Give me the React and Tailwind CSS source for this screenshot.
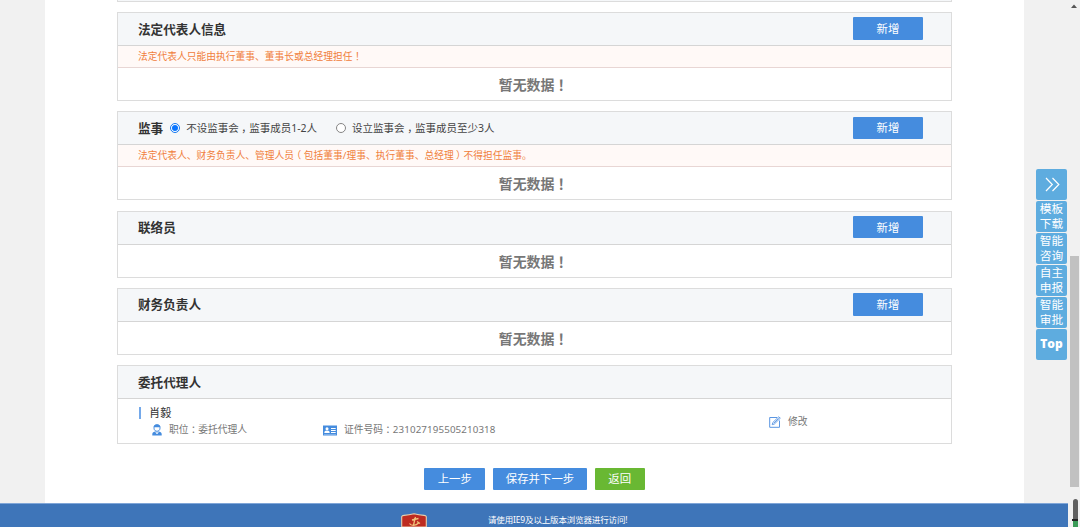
import clsx from 'clsx';

const sections = [
  { title: '法定代表人信息', notice: '法定代表人只能由执行董事、董事长或总经理担任！' },
  {
    title: '监事',
    options: ['不设监事会，监事成员1-2人', '设立监事会，监事成员至少3人'],
    notice: '法定代表人、财务负责人、管理人员（包括董事/理事、执行董事、总经理）不得担任监事。',
  },
  { title: '联络员' },
  { title: '财务负责人' },
];

const sideLinks = [
  ['模板', '下载'],
  ['智能', '咨询'],
  ['自主', '申报'],
  ['智能', '审批'],
];

/* Full-width marks sit in the middle of their cell */
const Text = ({ children }) =>
  children.split(/([，：！（）])/).map((part, i) =>
    /[，：！（）]/.test(part) ? (
      <span key={i} className="inline-block px-[0.25em] [font-feature-settings:'halt']">{part}</span>
    ) : (
      part
    )
  );

const Radio = ({ label, checked }) => (
  <label className="flex items-center text-[10.5px] text-[#444]">
    <span
      className={clsx(
        'mr-[6px] flex size-[10px] items-center justify-center rounded-full border bg-white',
        checked ? 'border-[#1478f0]' : 'border-[#858585]'
      )}
    >
      {checked && <span className="size-[6px] rounded-full bg-[#0875ff]" />}
    </span>
    <span className="pt-[2px]"><Text>{label}</Text></span>
  </label>
);

const Header = ({ title, options, action }) => (
  <div className="flex h-[33px] items-center border-b border-[#d5d5d5] bg-[#f5f7f9] pr-[28px] pl-[20px]">
    <h2 className="pt-[2px] text-[12.6px] font-bold text-[#333]">{title}</h2>
    {options && (
      <div className="ml-[7px] flex gap-[19px]">
        {options.map((label, i) => (
          <Radio key={label} label={label} checked={i === 0} />
        ))}
      </div>
    )}
    {action && (
      <button className="mb-px ml-auto h-[22.5px] w-[70px] rounded-[1px] bg-[#458cde] text-[11.4px] text-white">新增</button>
    )}
  </div>
);

const EmptySection = ({ title, options, notice }) => (
  <section className="border border-[#dcdcdc]">
    <Header title={title} options={options} action />
    {notice && (
      <p className="h-[22px] border-b border-[#e8d6d4] bg-[#fff9f7] pl-[20px] text-[9.75px] leading-[21.5px] text-[#f0803c]">
        <Text>{notice}</Text>
      </p>
    )}
    <p className="h-[32px] pr-[2px] text-center text-[13.9px] leading-[33.5px] font-bold text-[#777]">
      <Text>暂无数据！</Text>
    </p>
  </section>
);

const PersonIcon = () => (
  <svg className="h-[12px] w-[10px]" viewBox="0 0 10 12" fill="none" stroke="#458cde">
    <path d="M2 3.2C2 1.4 3.2.7 5 .7s3 .7 3 2.5v1C8 6 6.6 7.3 5 7.3S2 6 2 4.2z" />
    <path d="M2 3.3h6V2C7 .4 3 .4 2 2zM.3 11.5V10c0-1.5 1.5-2.2 3.2-2.4L5 9.3l1.5-1.7c1.7.2 3.2.9 3.2 2.4v1.5z" fill="#458cde" stroke="none" />
    <path d="M3.5 8.5L5 10l1.5-1.5" stroke="#fff" strokeWidth=".7" />
  </svg>
);

const IdCardIcon = () => (
  <svg className="h-[11px] w-[14px]" viewBox="0 0 14 11">
    <path d="M0 .5h14v10H0z" fill="#458cde" />
    <circle cx="4" cy="3.8" r="1.5" fill="#fff" />
    <path d="M1.3 8.1c0-1.7.8-2.5 2.7-2.5s2.7.8 2.7 2.5zM8 3h4.7v1H8zM8 5h4.7v1H8zM8 7h4.7v1H8z" fill="#fff" />
    <path d="M1 9.2h12v.5H1z" fill="#b5d1f3" />
  </svg>
);

const EditIcon = () => (
  <svg className="h-[12px] w-[12px]" viewBox="0 0 12 12" fill="none" stroke="#5b96e2">
    <path d="M8 1.5H.7v9.8h9.8V4.5" />
    <path d="M3.2 8.7l.6-2.2L9.7.8l1.6 1.4-6 5.9zM4.7 7.3l5-5" strokeWidth=".9" />
  </svg>
);

const AgentSection = () => (
  <section className="border border-[#dcdcdc]">
    <Header title="委托代理人" />
    <div className="flex h-[44px] text-[9.78px] text-[#777]">
      <div className="w-[651px] pt-[6px] pl-[21px]">
        <div className="flex h-[15px] items-center text-[11.2px] text-[#333]">
          <span className="mr-[8px] h-[12px] w-[2px] bg-[#74a9ea]" />
          <span className="pt-px">肖毅</span>
        </div>
        <div className="flex h-[20px] items-center pl-[13px]">
          <div className="flex w-[171px] items-center gap-[7px]">
            <PersonIcon />
            <span><Text>职位：委托代理人</Text></span>
          </div>
          <div className="flex items-center gap-[7px]">
            <IdCardIcon />
            <span><Text>证件号码：</Text><span className="tracking-[0.12px]">231027195505210318</span></span>
          </div>
        </div>
      </div>
      <div className="flex h-[45px] items-center gap-[7px]">
        <EditIcon />
        <span className="pt-[2px]">修改</span>
      </div>
    </div>
  </section>
);

const SideMenu = () => (
  <nav className="flex w-[31px] flex-col gap-px text-[11.7px] text-white">
    <div className="flex h-[31px] items-center justify-center rounded-[2px] bg-[#5eacdf] pl-px">
      <svg className="h-[15px] w-[15px]" viewBox="0 0 15 15" fill="none" stroke="currentColor" strokeWidth="1.2">
        <path d="M1 1l6.3 6.5L1 14M7.5 1l6.3 6.5-6.3 6.5" />
      </svg>
    </div>
    {sideLinks.map(([top, bottom], i) => (
      <div key={i} className="h-[31px] rounded-[2px] bg-[#5eacdf] text-center leading-[14.5px]">
        <div>{top}</div>
        <div>{bottom}</div>
      </div>
    ))}
    <div className="flex h-[31px] items-center justify-center rounded-[2px] bg-[#5eacdf] pb-[2px] font-['Open_Sans',sans-serif] text-[12px] font-extrabold">
      Top
    </div>
  </nav>
);

const Emblem = () => (
  <svg className="h-[14px] w-[26px]" viewBox="0 0 26 14">
    <path d="M.7 14V3.6Q1 2.6 3 2.4Q8 2.2 13 .8q5 1.4 10 1.6 2 .2 2.3 1.2V14z" fill="#bd2b20" stroke="#e7d0ad" strokeWidth="1.1" />
    <path d="M14.5 4l-2 8M11 7l6.5-1.5M8.5 10.5c1.5 2.5 6.5 2.5 9-.5M16 8.5l3 2" fill="none" stroke="#efc079" strokeWidth="1.3" />
  </svg>
);

const Scrollbar = () => (
  <div className="flex h-[527px] w-[12px] flex-col items-center bg-[#f1f1f1]">
    <svg className="mt-[4px] h-[4px] w-[6px] shrink-0" viewBox="0 0 6 4"><path d="M3 .5L6 4H0z" fill="#555" /></svg>
    <div className="mt-[248px] h-[231px] w-[9px] shrink-0 bg-[#c1c1c1]" />
    <div className="mt-[12px] ml-[3px] h-[20px] w-[5px] shrink-0 rounded-t-[3px] bg-[#606060]" />
    <div className="ml-[2px] h-[2px] w-[6px] shrink-0 bg-[#222]" />
    <div className="ml-[3px] h-[6px] w-[5px] shrink-0 bg-[#3a9b57]" />
  </div>
);

const App = () => (
  <div className="flex h-[527px] w-[1080px] overflow-hidden bg-[#f1f1f1] font-['Noto_Sans','Noto_Sans_CJK_SC',sans-serif]">
    <div className="flex w-[1068px] flex-col">
      <div className="flex h-[503px]">
        <main className="ml-[45px] flex w-[979px] flex-col bg-white px-[72px]">
          <div className="h-[2px] border-x border-b border-[#dcdcdc] bg-[#f5f7f9]" />
          <div className="mt-[10px] flex flex-col gap-[10.3px]">
            {sections.map((section) => (
              <EmptySection key={section.title} {...section} />
            ))}
            <AgentSection />
          </div>
          <div className="mt-[24px] flex justify-center gap-[7.5px] text-[11.4px] text-white">
            <button className="h-[22px] w-[61px] rounded-[1px] bg-[#458cde] pb-[2px]">上一步</button>
            <button className="h-[22px] w-[94.5px] rounded-[1px] bg-[#458cde] pb-[2px]">保存并下一步</button>
            <button className="h-[22px] w-[50px] rounded-[1px] bg-[#69b833] pb-[2px]">返回</button>
          </div>
        </main>
        <aside className="pt-[169px] pl-[12px]">
          <SideMenu />
        </aside>
      </div>
      <footer className="flex h-[24px] border-t border-[#80a6d8] bg-[#3e75b9] pl-[401px] text-[8.5px] text-white">
        <div className="pt-[9px]"><Emblem /></div>
        <p className="ml-[61px] pt-[9px] leading-[14px] tracking-[-0.15px]">请使用IE9及以上版本浏览器进行访问!</p>
      </footer>
    </div>
    <Scrollbar />
  </div>
);

export default App;
